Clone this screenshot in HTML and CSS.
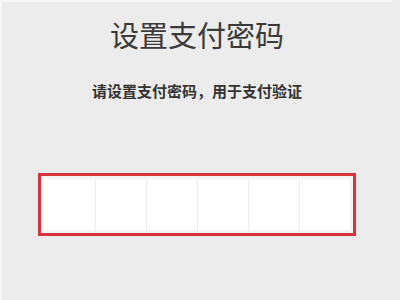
FILE: index.html
```html
<!DOCTYPE html>
<html lang="zh-CN">
<head>
    <meta charset="UTF-8">
    <title>设置支付密码</title>
    <link rel="stylesheet" href="styles.css">
</head>
<body>
    <div class="page">
        <h1 class="title">设置支付密码</h1>
        <p class="hint">请设置支付密码，用于支付验证</p>
        <div class="pwd-box">
            <div class="cell"></div>
            <div class="cell"></div>
            <div class="cell"></div>
            <div class="cell"></div>
            <div class="cell"></div>
            <div class="cell"></div>
        </div>
    </div>
</body>
</html>
```

FILE: styles.css
```css
html, body {
    margin: 0;
    height: 100%;
}

body {
    font-family: "Noto Sans CJK SC", "Liberation Sans", sans-serif;
    background-color: #ececec;
    overflow: hidden;
}

.page {
    width: 392px;
    height: 100%;
    display: flex;
    flex-direction: column;
    align-items: center;
    border-left: 2px solid #f6f6f6;
    border-top: 2px solid #f6f6f6;
    box-sizing: border-box;
}

.title {
    margin: 14px 0 0;
    font-size: 29px;
    font-weight: normal;
    line-height: 36px;
    color: #3a3a3a;
}

.hint {
    margin: 29px 0 0;
    font-size: 15px;
    font-weight: bold;
    line-height: 20px;
    color: #333;
}

.pwd-box {
    margin-top: 72px;
    display: flex;
    border: 3px solid #d7333d;
    padding: 3px;
    background-color: #f3f3f3;
}

.cell {
    width: 50px;
    height: 51px;
    background-color: #fff;
    border-left: 1px solid #ebebeb;
}

.cell:first-child {
    border-left: none;
    width: 51px;
}
```
